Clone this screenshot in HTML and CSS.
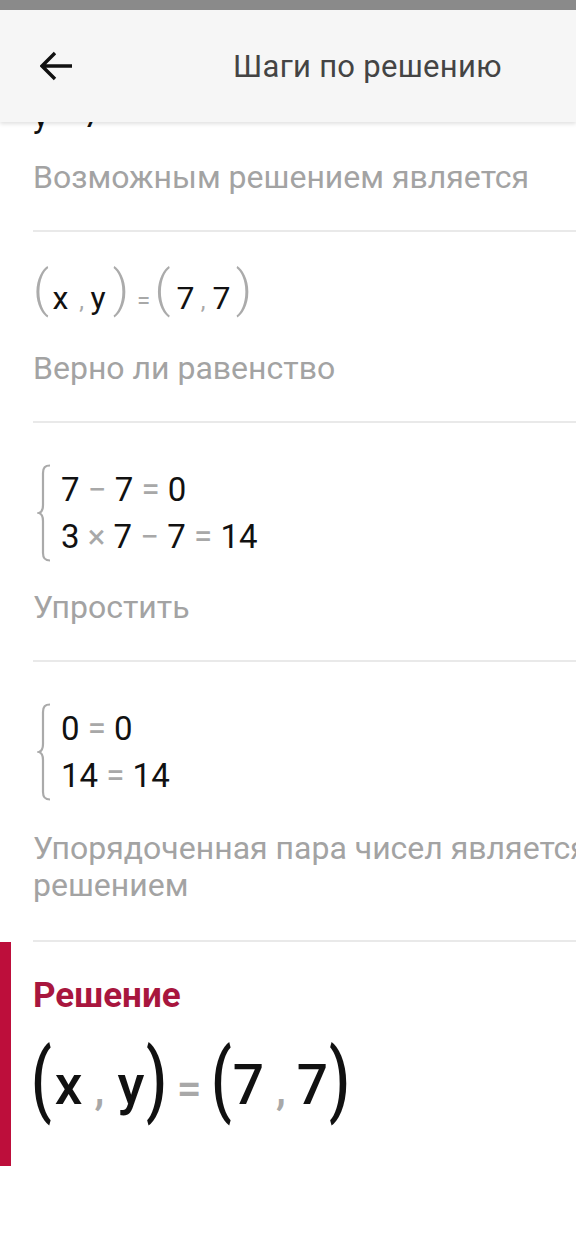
FILE: index.html
```html
<!DOCTYPE html>
<html lang="ru">
<head>
<meta charset="utf-8">
<title>Шаги по решению</title>
<link rel="stylesheet" href="styles.css">
</head>
<body>
<header class="topbar">
  <div class="statusbar"></div>
  <div class="toolbar">
    <button class="back" aria-label="Назад">
      <svg width="34" height="30" viewBox="0 0 34 30"><path d="M32 15H3M15 2L2 15L15 28" fill="none" stroke="#111" stroke-width="3.4"/></svg>
    </button>
    <h1 class="title">Шаги по решению</h1>
  </div>
</header>

<main class="steps">
  <section class="step first">
    <div class="math line">y <span class="op">=</span> 7</div>
    <p class="caption">Возможным решением является</p>
  </section>

  <section class="step">
    <div class="math pair">
      <span class="paren">(</span><span class="v">x</span><span class="comma">,</span><span class="v">y</span><span class="paren">)</span><span class="eq">=</span><span class="paren">(</span><span class="v">7</span><span class="comma">,</span><span class="v">7</span><span class="paren">)</span>
    </div>
    <p class="caption">Верно ли равенство</p>
  </section>

  <section class="step">
    <div class="system">
      <svg class="brace" width="16" height="98" viewBox="0 0 16 98"><path d="M13 1.5C8 1.5 6 3.5 6 9V41C6 46 5 48 2 49C5 50 6 52 6 57V89C6 94.5 8 96.5 13 96.5" fill="none" stroke="#aaa" stroke-width="2.2"/></svg>
      <div class="rows">
        <div class="math line">7 <span class="op">−</span> 7 <span class="op">=</span> 0</div>
        <div class="math line">3 <span class="op">×</span> 7 <span class="op">−</span> 7 <span class="op">=</span> 14</div>
      </div>
    </div>
    <p class="caption">Упростить</p>
  </section>

  <section class="step last">
    <div class="system">
      <svg class="brace" width="16" height="98" viewBox="0 0 16 98"><path d="M13 1.5C8 1.5 6 3.5 6 9V41C6 46 5 48 2 49C5 50 6 52 6 57V89C6 94.5 8 96.5 13 96.5" fill="none" stroke="#aaa" stroke-width="2.2"/></svg>
      <div class="rows">
        <div class="math line">0 <span class="op">=</span> 0</div>
        <div class="math line">14 <span class="op">=</span> 14</div>
      </div>
    </div>
    <p class="caption">Упорядоченная пара чисел является решением</p>
  </section>
</main>

<section class="solution">
  <h2 class="sol-title">Решение</h2>
  <div class="math big">
    <span class="paren">(</span><span class="v">x</span><span class="comma">,</span><span class="v">y</span><span class="paren">)</span><span class="eq">=</span><span class="paren">(</span><span class="v">7</span><span class="comma">,</span><span class="v">7</span><span class="paren">)</span>
  </div>
</section>
</body>
</html>
```

FILE: styles.css
```css
* { box-sizing: border-box; }

html, body {
  margin: 0;
  padding: 0;
  background: #ffffff;
  font-family: Roboto, "Noto Sans", "Liberation Sans", sans-serif;
  color: #111;
}

body {
  width: 576px;
  height: 1241px;
  overflow: hidden;
}

/* Header overlaying the scrolled content */
.topbar {
  position: fixed;
  top: 0;
  left: 0;
  right: 0;
  z-index: 10;
  box-shadow: 0 2px 4px rgba(0,0,0,0.12);
}

.statusbar {
  height: 10px;
  background: #8a8a8a;
}

.toolbar {
  height: 112px;
  background: #f6f6f6;
  display: flex;
  align-items: center;
}

.back {
  border: 0;
  background: none;
  padding: 0;
  margin-left: 40px;
  width: 34px;
  height: 30px;
  display: flex;
}

.title {
  margin: 0 0 0 159px;
  font-size: 31px;
  font-weight: 400;
  color: #444;
  letter-spacing: 0.3px;
}

/* Steps */
.steps {
  margin-left: 33px;
  overflow: hidden;
}

.step {
  display: flex;
  flex-direction: column;
  gap: 27px;
  padding: 41px 0 34px 0;
  border-bottom: 2px solid #e9e9e9;
}

.step.first {
  padding-top: 92px;
  gap: 20px;
}

.step.last {
  gap: 29px;
  padding-bottom: 36px;
}

.caption {
  margin: 0;
  font-size: 32px;
  line-height: 37px;
  color: #a3a3a3;
}

.step.last .caption {
  width: 560px;
}

.math {
  font-size: 33px;
  color: #111;
}

.math .op,
.math .eq,
.math .comma {
  color: #a8a8a8;
}

.line {
  line-height: 47px;
  height: 47px;
  white-space: nowrap;
}

/* pair in parentheses: fixed slots so glyph centres line up */
.pair,
.big {
  display: flex;
  align-items: baseline;
}

.pair > span,
.big > span {
  display: flex;
  justify-content: center;
  flex: none;
}

.pair {
  height: 50px;
  font-size: 32px;
}

.pair .v { line-height: 50px; }

.pair .paren {
  font-size: 50px;
  font-weight: 300;
  line-height: 37px;
  color: #ababab;
  transform: translateY(-3px);
}

.pair .comma,
.pair .eq {
  font-size: 24px;
  line-height: 24px;
}

.pair > span:nth-child(1)  { width: 16px; }
.pair > span:nth-child(2)  { width: 23px; }
.pair > span:nth-child(3)  { width: 19px; }
.pair > span:nth-child(4)  { width: 14px; }
.pair > span:nth-child(5)  { width: 32px; }
.pair > span:nth-child(6)  { width: 13px; }
.pair > span:nth-child(7)  { width: 25px; }
.pair > span:nth-child(8)  { width: 21px; }
.pair > span:nth-child(9)  { width: 14px; }
.pair > span:nth-child(10) { width: 23px; }
.pair > span:nth-child(11) { width: 22px; }

/* systems with brace */
.system {
  display: flex;
  align-items: center;
  gap: 8px;
  padding-left: 4px;
}

.brace {
  display: block;
  flex: none;
}

.rows {
  display: flex;
  flex-direction: column;
}

/* final solution */
.solution {
  border-left: 11px solid #bd0e3b;
  height: 224px;
  padding: 34px 0 0 22px;
}

.sol-title {
  margin: 0;
  font-size: 35px;
  line-height: 40px;
  font-weight: 700;
  color: #a8163e;
}

.big {
  height: 90px;
  margin-top: 24px;
  font-size: 55px;
  font-weight: 500;
}

.big .v { line-height: 90px; }

.big .paren {
  font-size: 60px;
  font-weight: 500;
  line-height: 86px;
  color: #111;
  transform-origin: 50% 47px;
  transform: translateY(-3px) scaleY(1.36);
}

.big .comma,
.big .eq {
  font-size: 44px;
  line-height: 44px;
}

.big > span:nth-child(1)  { width: 17px; }
.big > span:nth-child(2)  { width: 37px; }
.big > span:nth-child(3)  { width: 25px; }
.big > span:nth-child(4)  { width: 38px; }
.big > span:nth-child(5)  { width: 13px; }
.big > span:nth-child(6)  { width: 52px; }
.big > span:nth-child(7)  { width: 13px; }
.big > span:nth-child(8)  { width: 41px; }
.big > span:nth-child(9)  { width: 24px; }
.big > span:nth-child(10) { width: 39px; }
.big > span:nth-child(11) { width: 15px; }
```
